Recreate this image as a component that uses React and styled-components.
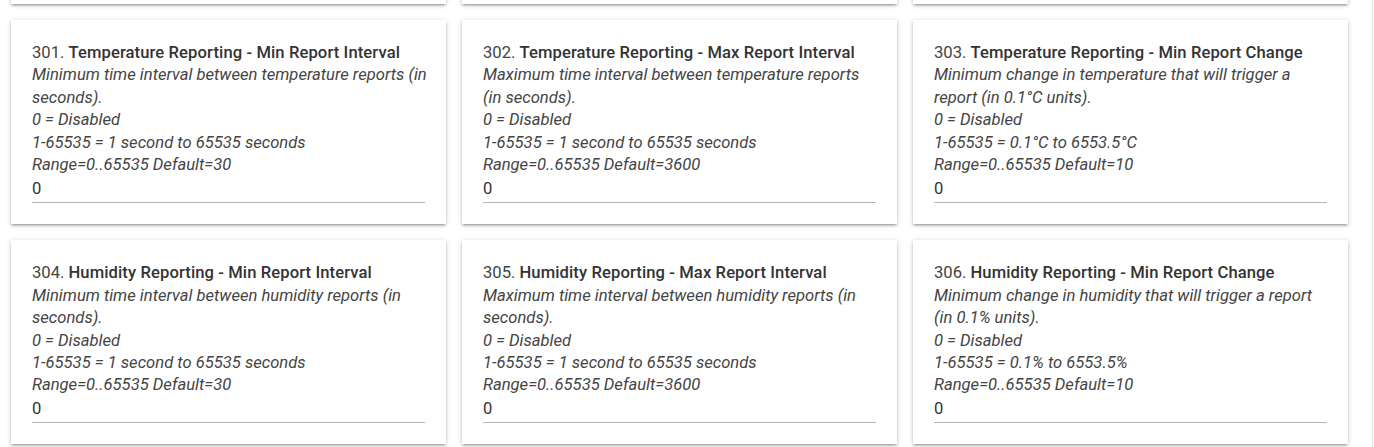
import React from 'react'
import styled, {createGlobalStyle} from 'styled-components'

const Global = createGlobalStyle`
  html, body {
    margin: 0;
    padding: 0;
    background: #fff;
    font-family: Roboto, "Liberation Sans", sans-serif;
    overflow: hidden;
  }
`

const Page = styled.div`
  display: flex;
  height: 447px;
  overflow: hidden;
`

const Main = styled.main`
  flex: 1;
  padding: 0 11px;
`

const Rail = styled.div`
  width: 1px;
  margin-right: 1px;
  background: #e4e4e4;
`

const Grid = styled.div`
  display: grid;
  grid-template-columns: repeat(3, 435px);
  column-gap: 16px;
  row-gap: 16px;
  margin-top: -200px;
`

const Card = styled.div`
  background: #fff;
  box-shadow: 0 2px 2px 0 rgba(0,0,0,.14), 0 3px 1px -2px rgba(0,0,0,.12), 0 1px 5px 0 rgba(0,0,0,.2);
  padding: 22px 21px 21px;
  height: ${p => p.$stub ? '204px' : 'auto'};
  box-sizing: border-box;
  color: #444;
  font-size: 16.6px;
  line-height: 22.45px;
`

const Title = styled.div`
  color: #444;
`

const Name = styled.b`
  font-weight: 500;
  letter-spacing: 0.1px;
  color: #333;
`

const Desc = styled.div`
  font-style: italic;
  margin-right: -4px;
  color: #444;
`

const Value = styled.div`
  margin-top: 1.5px;
  border-bottom: 1px solid #b5b5b5;
  padding-bottom: 1.5px;
  color: #333;
`

const params = [
  {n: 301, name: 'Temperature Reporting - Min Report Interval', lines: ['Minimum time interval between temperature reports (in seconds).', '0 = Disabled', '1-65535 = 1 second to 65535 seconds', 'Range=0..65535 Default=30']},
  {n: 302, name: 'Temperature Reporting - Max Report Interval', lines: ['Maximum time interval between temperature reports (in seconds).', '0 = Disabled', '1-65535 = 1 second to 65535 seconds', 'Range=0..65535 Default=3600']},
  {n: 303, name: 'Temperature Reporting - Min Report Change', lines: ['Minimum change in temperature that will trigger a report (in 0.1°C units).', '0 = Disabled', '1-65535 = 0.1°C to 6553.5°C', 'Range=0..65535 Default=10']},
  {n: 304, name: 'Humidity Reporting - Min Report Interval', lines: ['Minimum time interval between humidity reports (in seconds).', '0 = Disabled', '1-65535 = 1 second to 65535 seconds', 'Range=0..65535 Default=30']},
  {n: 305, name: 'Humidity Reporting - Max Report Interval', lines: ['Maximum time interval between humidity reports (in seconds).', '0 = Disabled', '1-65535 = 1 second to 65535 seconds', 'Range=0..65535 Default=3600']},
  {n: 306, name: 'Humidity Reporting - Min Report Change', lines: ['Minimum change in humidity that will trigger a report (in 0.1% units).', '0 = Disabled', '1-65535 = 0.1% to 6553.5%', 'Range=0..65535 Default=10']},
]

const Param = ({n, name, lines}) => (
  <Card>
    <Title>{n}. <Name>{name}</Name></Title>
    <Desc>{lines.map((l, i) => <div key={i}>{l}</div>)}</Desc>
    <Value>0</Value>
  </Card>
)

export default function App() {
  return (
    <Page>
      <Global />
      <Main>
        <Grid>
          {[0, 1, 2].map(i => <Card key={i} $stub />)}
          {params.map(p => <Param key={p.n} {...p} />)}
        </Grid>
      </Main>
      <Rail />
    </Page>
  )
}
